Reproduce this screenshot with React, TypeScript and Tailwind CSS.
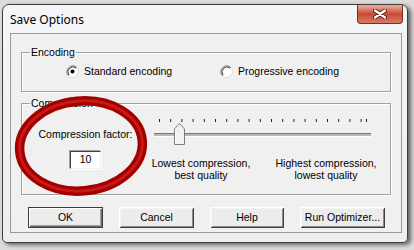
import React from 'react';

const ticks = [...Array.from({ length: 19 }, (_, i) => 5.5 + i * 11.2), 212.5];

function Radio({ checked }: { checked?: boolean }) {
  return (
    <svg width="13" height="13" viewBox="0 0 13 13" className="shrink-0">
      <circle cx="6.5" cy="6.5" r="6" fill="#fff" stroke="#d8d8d8" />
      <path d="M2.3 10.7 A6 6 0 0 1 10.7 2.3" fill="none" stroke="#808080" />
      <path d="M3 10 A5 5 0 0 1 10 3" fill="none" stroke="#404040" />
      {checked && <circle cx="6.5" cy="6.5" r="2" fill="#000" />}
    </svg>
  );
}

function Btn({ label, w, def }: { label: string; w: string; def?: boolean }) {
  return (
    <button
      className={`${w} h-[21px] text-[10.5px] text-black bg-[#ececec] ${
        def
          ? 'border border-[#3c3c3c] shadow-[inset_1px_1px_0_#fff,inset_-1px_-1px_0_#6a6a6a,inset_-2px_-2px_0_#a0a0a0]'
          : 'shadow-[inset_1px_1px_0_#fff,inset_-1px_-1px_0_#404040,inset_2px_2px_0_#f4f4f4,inset_-2px_-2px_0_#8a8a8a]'
      }`}
    >
      {label}
    </button>
  );
}

export default function App() {
  return (
    <div className="relative w-[414px] h-[250px] overflow-hidden bg-[#dcdcdc] pl-[2px] pt-[4px] font-['Liberation_Sans',Arial,sans-serif]">
      {/* window frame */}
      <div className="w-[406px] h-[239px] flex flex-col rounded-t-[7px] rounded-b-[5px] border border-[#3e3e3e] bg-gradient-to-b from-[#f4f5f6] to-[#eceeef] shadow-[3px_2px_4px_rgba(0,0,0,0.55)]">
        <div className="h-[28px] flex justify-between items-start">
          <span className="ml-[7px] mt-[6px] text-[12px] text-black font-['Noto_Sans',sans-serif]">Save Options</span>
          <div className="mr-[4px] w-[46px] h-[19px] rounded-b-[4px] border border-t-0 border-[#7b2d20] bg-gradient-to-b from-[#eab0a2] via-[#c64a33] to-[#dc7a66] flex items-center justify-center">
            <svg width="14" height="10" viewBox="0 0 14 10">
              <path d="M2 1.5 L12 8.5 M12 1.5 L2 8.5" stroke="#5a1a12" strokeWidth="4" strokeLinecap="round" />
              <path d="M2 1.5 L12 8.5 M12 1.5 L2 8.5" stroke="#fff" strokeWidth="2.2" strokeLinecap="round" />
            </svg>
          </div>
        </div>

        {/* client */}
        <div className="ml-[7px] mr-[5px] h-[200px] border border-[#9a9a9a] bg-[#f0f0f0] px-[10px] pt-[12px] text-[10.5px] text-black">
          <fieldset className="h-[46px] border border-[#a0a0a0] shadow-[inset_1px_1px_0_#fff,1px_1px_0_#fff]">
            <legend className="ml-[8px] px-[1px] leading-[13px]">Encoding</legend>
            <div className="flex items-center pl-[44px] pt-[6px] leading-[13px]">
              <div className="w-[154px] flex items-center gap-[5px]">
                <Radio checked />
                <span>Standard encoding</span>
              </div>
              <div className="flex items-center gap-[5px]">
                <Radio />
                <span>Progressive encoding</span>
              </div>
            </div>
          </fieldset>

          <fieldset className="mt-[5px] h-[98px] border border-[#a0a0a0] shadow-[inset_1px_1px_0_#fff,1px_1px_0_#fff]">
            <legend className="ml-[8px] px-[1px] leading-[13px]">Compression</legend>
            <div className="flex items-start">
              <div className="w-[127px] flex flex-col items-center pt-[18px]">
                <span className="leading-[13px]">Compression factor:</span>
                <div className="mt-[10px] w-[31px] h-[18px] bg-white flex items-center justify-center border border-t-[#404040] border-l-[#404040] border-b-[#f0f0f0] border-r-[#f0f0f0] shadow-[1px_1px_0_#fff,-1px_-1px_0_#a0a0a0]">
                  10
                </div>
              </div>
              <div className="w-[230px] pt-[7px]">
                <div className="ml-[5px] w-[217px] h-[28px] flex flex-col">
                  <svg width="217" height="6" className="shrink-0">
                    {ticks.map((x) => (
                      <line key={x} x1={x} y1="2" x2={x} y2="5" stroke="#202020" />
                    ))}
                  </svg>
                  <div className="relative mt-[10px] h-[3px] border-t border-[#7a7a7a] bg-[#b8b8b8] shadow-[0_1px_0_#fff]">
                    <svg width="11" height="22" viewBox="0 0 11 22" className="absolute left-[20px] top-[-11px]">
                      <path d="M0.5 21.5 V6 L5.5 0.5 L10.5 6 V21.5 Z" fill="#f2f2f2" stroke="#7c7c7c" />
                      <path d="M1.5 20.5 V6.4 L5.5 2" fill="none" stroke="#fff" />
                    </svg>
                  </div>
                </div>
                <div className="mt-[12px] flex leading-[12px]">
                  <div className="w-[104px] text-center">Lowest compression,<br />best quality</div>
                  <div className="ml-[21px] w-[104px] text-center">Highest compression,<br />lowest quality</div>
                </div>
              </div>
            </div>
          </fieldset>

          <div className="mt-[12px] flex pl-[7px] gap-[16px]">
            <Btn label="OK" w="w-[75px]" def />
            <Btn label="Cancel" w="w-[75px]" />
            <Btn label="Help" w="w-[74px]" />
            <Btn label="Run Optimizer..." w="w-[85px]" />
          </div>
        </div>
      </div>

      {/* red marker ellipse drawn over the dialog */}
      <svg width="414" height="250" className="absolute left-0 top-0 pointer-events-none">
        <g transform="rotate(-5 81 146)">
          <ellipse cx="81" cy="146" rx="61.5" ry="45" fill="none" stroke="#a30000" strokeWidth="9.5" />
          <ellipse cx="81" cy="146" rx="61.5" ry="45" fill="none" stroke="#c81818" strokeWidth="3" />
        </g>
      </svg>
    </div>
  );
}
